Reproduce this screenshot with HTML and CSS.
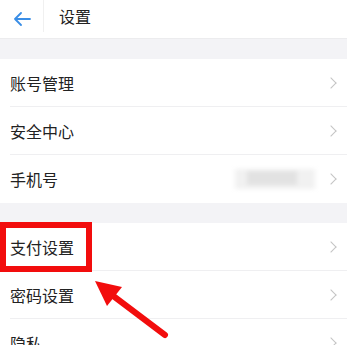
FILE: index.html
```html
<!DOCTYPE html>
<html lang="zh-CN">
<head>
    <meta charset="UTF-8">
    <meta name="viewport" content="width=device-width, initial-scale=1.0">
    <title>设置</title>
    <link rel="stylesheet" href="styles.css">
</head>
<body>
    <div class="page">
        <!-- Top bar -->
        <div class="topbar">
            <div class="back">
                <svg width="18" height="14" viewBox="0 0 18 14">
                    <path d="M17 7H2M8 1L2 7l6 6" fill="none" stroke="#3a8ee6" stroke-width="1.8" stroke-linecap="round" stroke-linejoin="round"/>
                </svg>
            </div>
            <div class="title">设置</div>
        </div>

        <div class="gap"></div>

        <div class="group">
            <div class="row"><span class="label">账号管理</span><span class="chev"></span></div>
            <div class="row"><span class="label">安全中心</span><span class="chev"></span></div>
            <div class="row"><span class="label">手机号</span><span class="phone"><i></i></span><span class="chev"></span></div>
        </div>

        <div class="gap"></div>

        <div class="group">
            <div class="row"><span class="label">支付设置</span><span class="chev"></span></div>
            <div class="row"><span class="label">密码设置</span><span class="chev"></span></div>
            <div class="row"><span class="label">隐私</span><span class="chev"></span></div>
        </div>

        <!-- Annotation -->
        <div class="mark"></div>
        <svg class="pointer" width="347" height="345" viewBox="0 0 347 345">
            <line x1="165" y1="335" x2="108" y2="292" stroke="#f20d0d" stroke-width="6" stroke-linecap="round"/>
            <polygon points="95,281 122,287 107,306" fill="#f20d0d"/>
        </svg>
    </div>
</body>
</html>
```

FILE: styles.css
```css
body {
    margin: 0;
    padding: 0;
    background-color: #ffffff;
    font-family: "Noto Sans CJK SC", "Noto Sans", sans-serif;
    color: #222;
}
.page {
    position: relative;
    width: 347px;
    height: 345px;
    overflow: hidden;
}
.topbar {
    display: flex;
    align-items: center;
    height: 39px;
    border-bottom: 1px solid #ececee;
    box-sizing: border-box;
}
.back {
    width: 44px;
    height: 32px;
    margin-top: -7px;
    display: flex;
    align-items: center;
    justify-content: center;
    border-right: 1px solid #f0f0f0;
    box-sizing: border-box;
    padding-top: 6px;
}
.title {
    margin-left: 15px;
    margin-top: -7px;
    font-size: 16px;
    color: #222;
}
.gap {
    height: 20px;
    background-color: #f3f3f6;
}
.row {
    display: flex;
    align-items: center;
    height: 48px;
    margin-left: 10px;
    padding-right: 8px;
    border-bottom: 1px solid #efeff1;
    box-sizing: border-box;
}
.group .row:last-child {
    border-bottom: none;
}
.label {
    flex: 1;
    font-size: 16px;
}
.chev {
    width: 7px;
    height: 7px;
    border-top: 1.3px solid #c4c4c4;
    border-right: 1.3px solid #c4c4c4;
    transform: rotate(45deg);
    margin-right: 4px;
}
.phone {
    width: 80px;
    height: 20px;
    margin-right: 12px;
    position: relative;
    background-color: #f1f1f1;
    filter: blur(2px);
}
.phone i {
    position: absolute;
    left: 12px;
    top: 2px;
    width: 50px;
    height: 14px;
    background-color: #e2e2e2;
}
.mark {
    position: absolute;
    left: 0;
    top: 222px;
    width: 92px;
    height: 50px;
    border: 6px solid #f20d0d;
    box-sizing: border-box;
}
.pointer {
    position: absolute;
    left: 0;
    top: 0;
}
```
